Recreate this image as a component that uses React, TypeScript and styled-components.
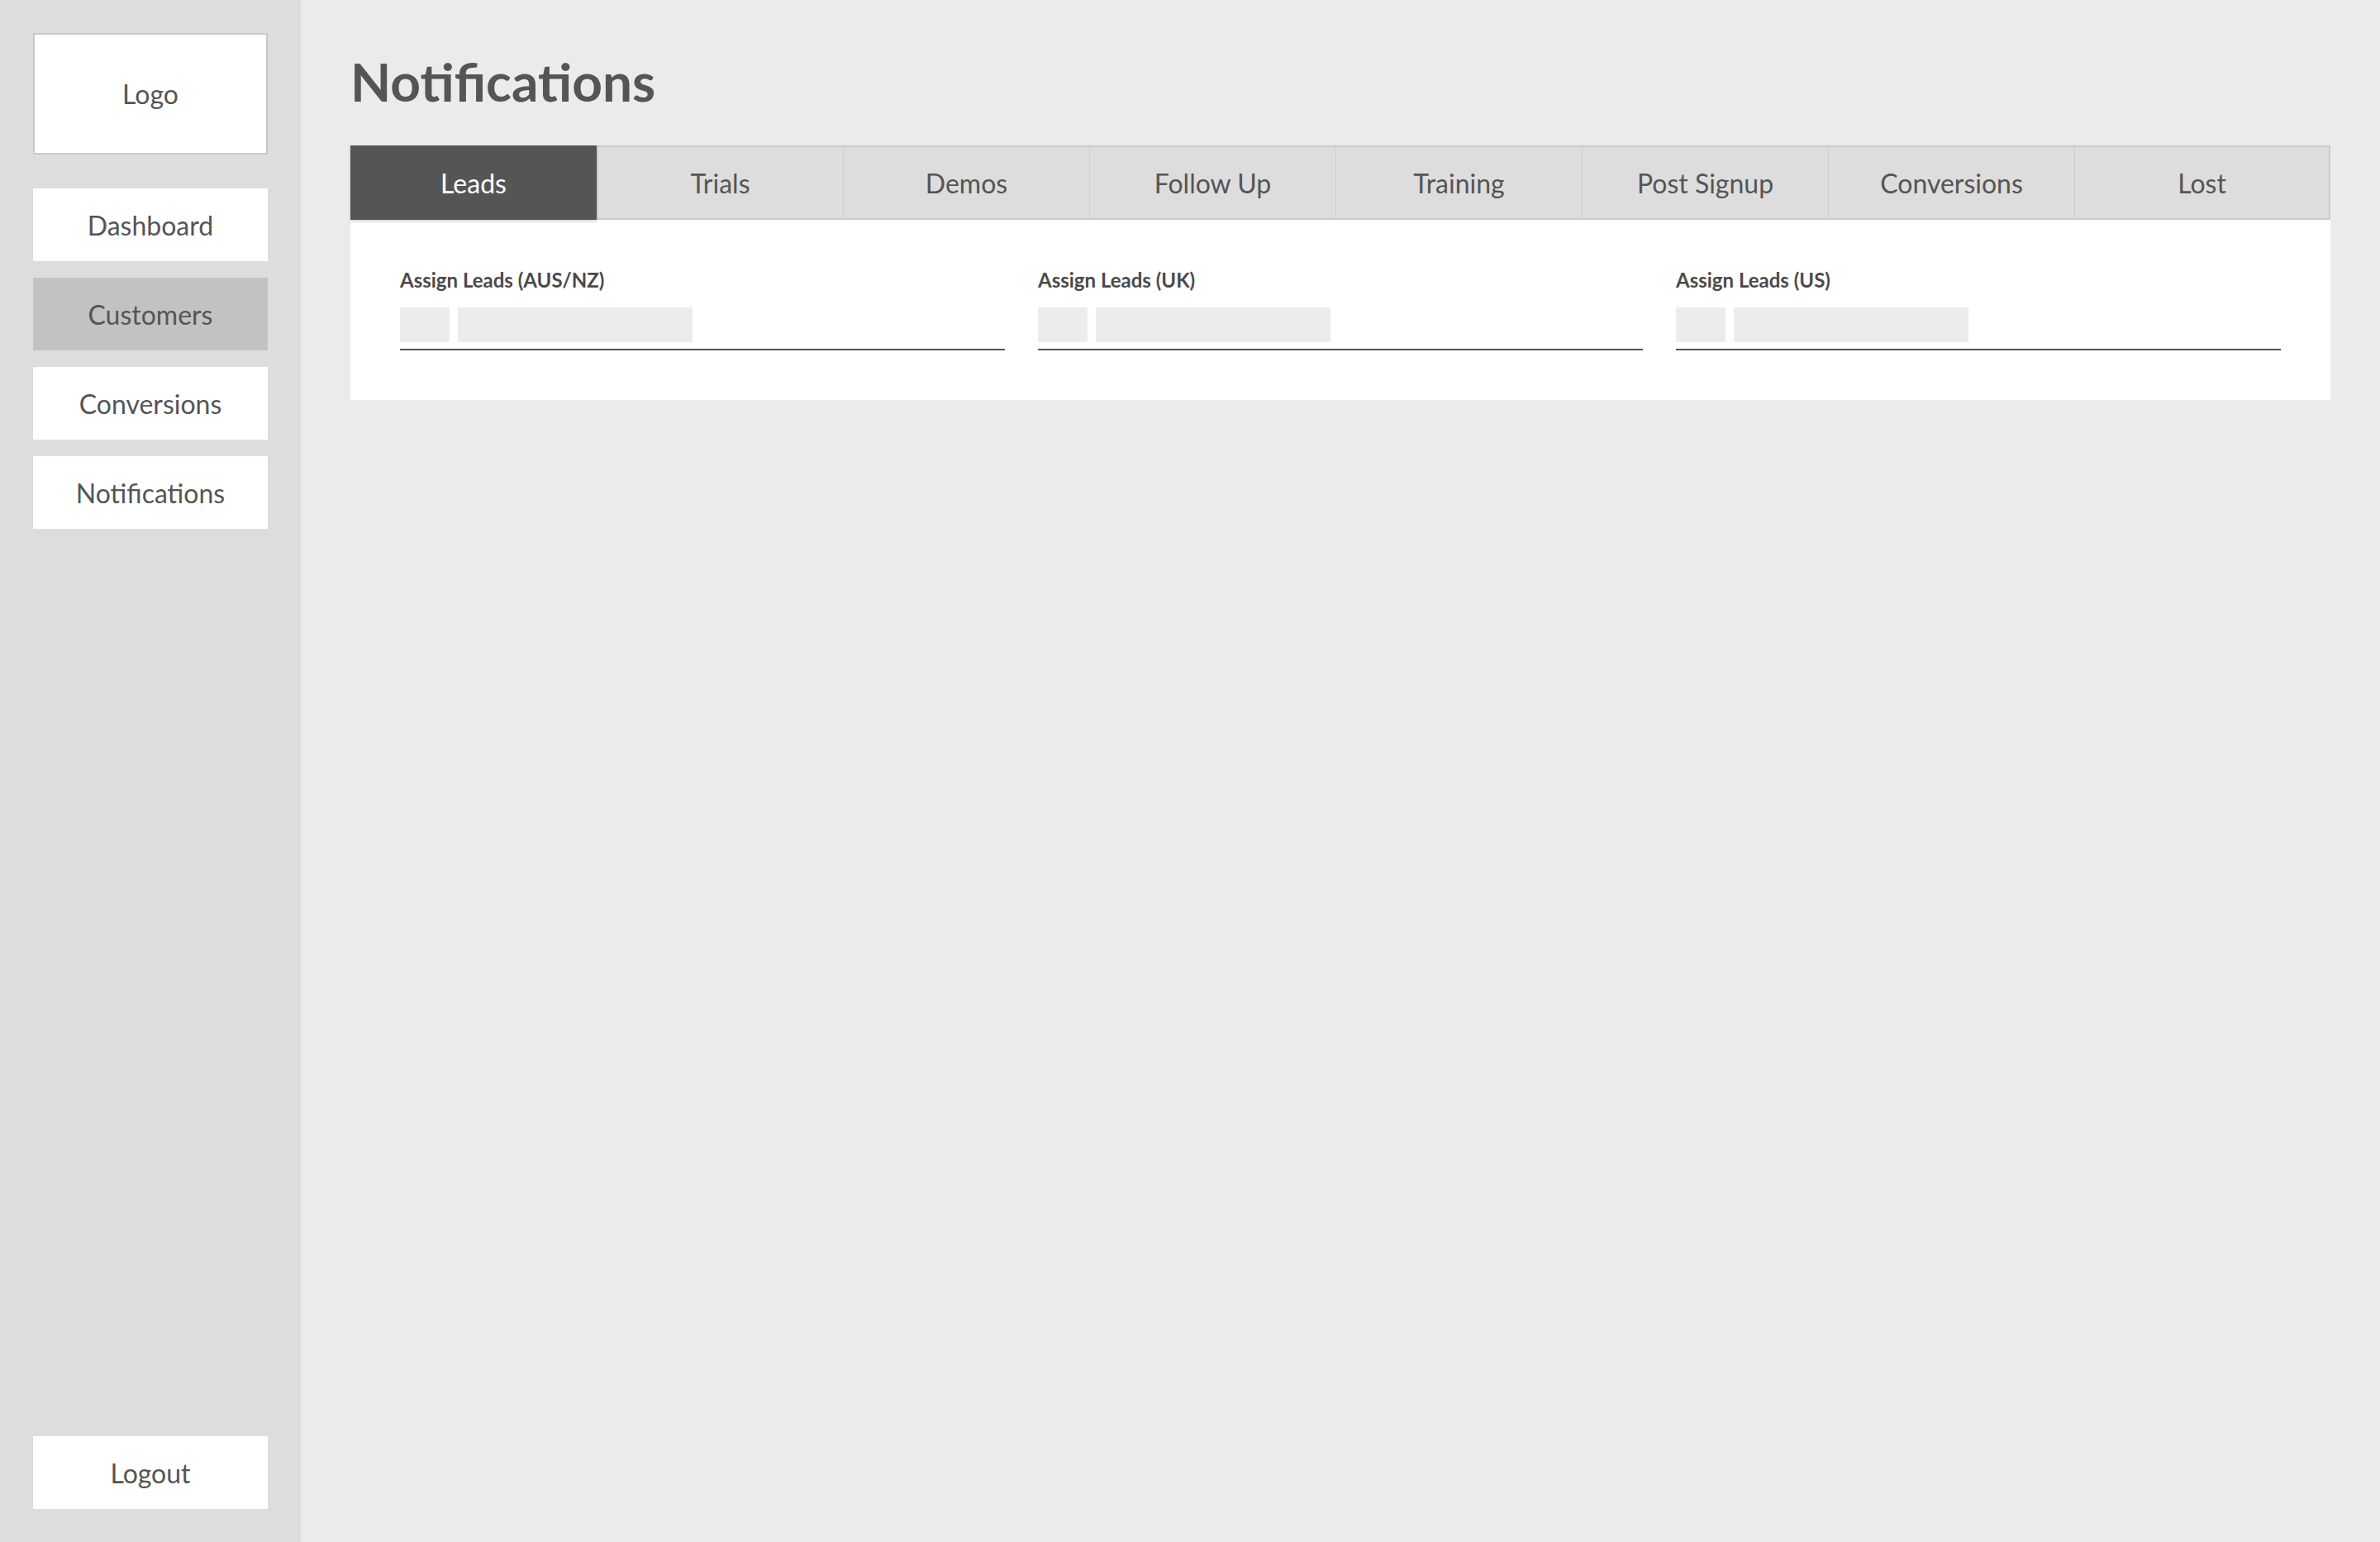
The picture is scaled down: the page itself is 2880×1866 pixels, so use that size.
import React from "react";
import styled, { createGlobalStyle } from "styled-components";

const GlobalStyle = createGlobalStyle`
  html, body {
    margin: 0;
    padding: 0;
    height: 100%;
  }
  body {
    font-family: Lato, "Open Sans", Arial, sans-serif;
    color: #555555;
    background: #ebebeb;
  }
  #root {
    height: 100%;
  }
  * { box-sizing: border-box; }
`;

const Layout = styled.div`
  display: flex;
  width: 100%;
  height: 1866px;
  background: #ebebeb;
`;

const Sidebar = styled.aside`
  width: 364px;
  flex: 0 0 364px;
  background: #dddddd;
  padding: 40px;
  display: flex;
  flex-direction: column;
`;

const LogoBox = styled.div`
  height: 147px;
  background: #ffffff;
  border: 2px solid #c9c9c9;
  display: flex;
  align-items: center;
  justify-content: center;
  font-size: 32px;
  color: #555555;
  margin-bottom: 41px;
`;

const NavList = styled.nav`
  display: flex;
  flex-direction: column;
  gap: 20px;
`;

const NavItem = styled.div<{ $active?: boolean }>`
  height: 88px;
  background: ${(p) => (p.$active ? "#c2c2c2" : "#ffffff")};
  display: flex;
  align-items: center;
  justify-content: center;
  font-size: 32px;
  color: #555555;
`;

const LogoutItem = styled(NavItem)`
  margin-top: auto;
`;

const Main = styled.main`
  flex: 1;
  padding: 60px 60px 60px 60px;
  display: flex;
  flex-direction: column;
`;

const Title = styled.h1`
  margin: 0 0 39px 0;
  font-size: 64px;
  line-height: 77px;
  font-weight: 700;
  color: #555555;
`;

const TabBar = styled.div`
  display: flex;
  height: 90px;
  background: #dddddd;
  border-top: 2px solid #cacaca;
  border-bottom: 2px solid #cacaca;
  border-right: 2px solid #cacaca;
`;

const Tab = styled.div<{ $active?: boolean; $fill?: boolean }>`
  flex: ${(p) => (p.$fill ? "1 1 0" : "0 0 298px")};
  display: flex;
  align-items: center;
  justify-content: center;
  font-size: 32px;
  color: ${(p) => (p.$active ? "#ffffff" : "#555555")};
  background: ${(p) => (p.$active ? "#555555" : "#dddddd")};
  border-left: ${(p) => (p.$active ? "none" : "1px solid #cccccc")};
  margin-top: ${(p) => (p.$active ? "-2px" : "0")};
  margin-bottom: ${(p) => (p.$active ? "-2px" : "0")};
  box-shadow: ${(p) => (p.$active ? "0 2px 3px rgba(0,0,0,0.18)" : "none")};
  position: relative;
  z-index: ${(p) => (p.$active ? 1 : 0)};
`;

const Panel = styled.section`
  background: #ffffff;
  padding: 60px;
  display: grid;
  grid-template-columns: repeat(3, 1fr);
  column-gap: 40px;
`;

const Field = styled.div`
  display: flex;
  flex-direction: column;
`;

const FieldLabel = styled.div`
  font-size: 24px;
  line-height: 26px;
  font-weight: 700;
  color: #4a4a4a;
  margin-bottom: 20px;
`;

const FieldInput = styled.div`
  display: flex;
  gap: 10px;
  padding-bottom: 8px;
  border-bottom: 2px solid #555555;
`;

const Placeholder = styled.div<{ $w: number }>`
  width: ${(p) => p.$w}px;
  height: 42px;
  background: #ececec;
`;

const tabs = [
  "Leads",
  "Trials",
  "Demos",
  "Follow Up",
  "Training",
  "Post Signup",
  "Conversions",
  "Lost",
];

const fields = ["Assign Leads (AUS/NZ)", "Assign Leads (UK)", "Assign Leads (US)"];

export default function App() {
  return (
    <>
      <GlobalStyle />
      <Layout>
        <Sidebar>
          <LogoBox>Logo</LogoBox>
          <NavList>
            <NavItem>Dashboard</NavItem>
            <NavItem $active>Customers</NavItem>
            <NavItem>Conversions</NavItem>
            <NavItem>Notifications</NavItem>
          </NavList>
          <LogoutItem>Logout</LogoutItem>
        </Sidebar>
        <Main>
          <Title>Notifications</Title>
          <TabBar>
            {tabs.map((t, i) => (
              <Tab key={t} $active={i === 0} $fill={i === tabs.length - 1}>
                {t}
              </Tab>
            ))}
          </TabBar>
          <Panel>
            {fields.map((f) => (
              <Field key={f}>
                <FieldLabel>{f}</FieldLabel>
                <FieldInput>
                  <Placeholder $w={60} />
                  <Placeholder $w={284} />
                </FieldInput>
              </Field>
            ))}
          </Panel>
        </Main>
      </Layout>
    </>
  );
}
